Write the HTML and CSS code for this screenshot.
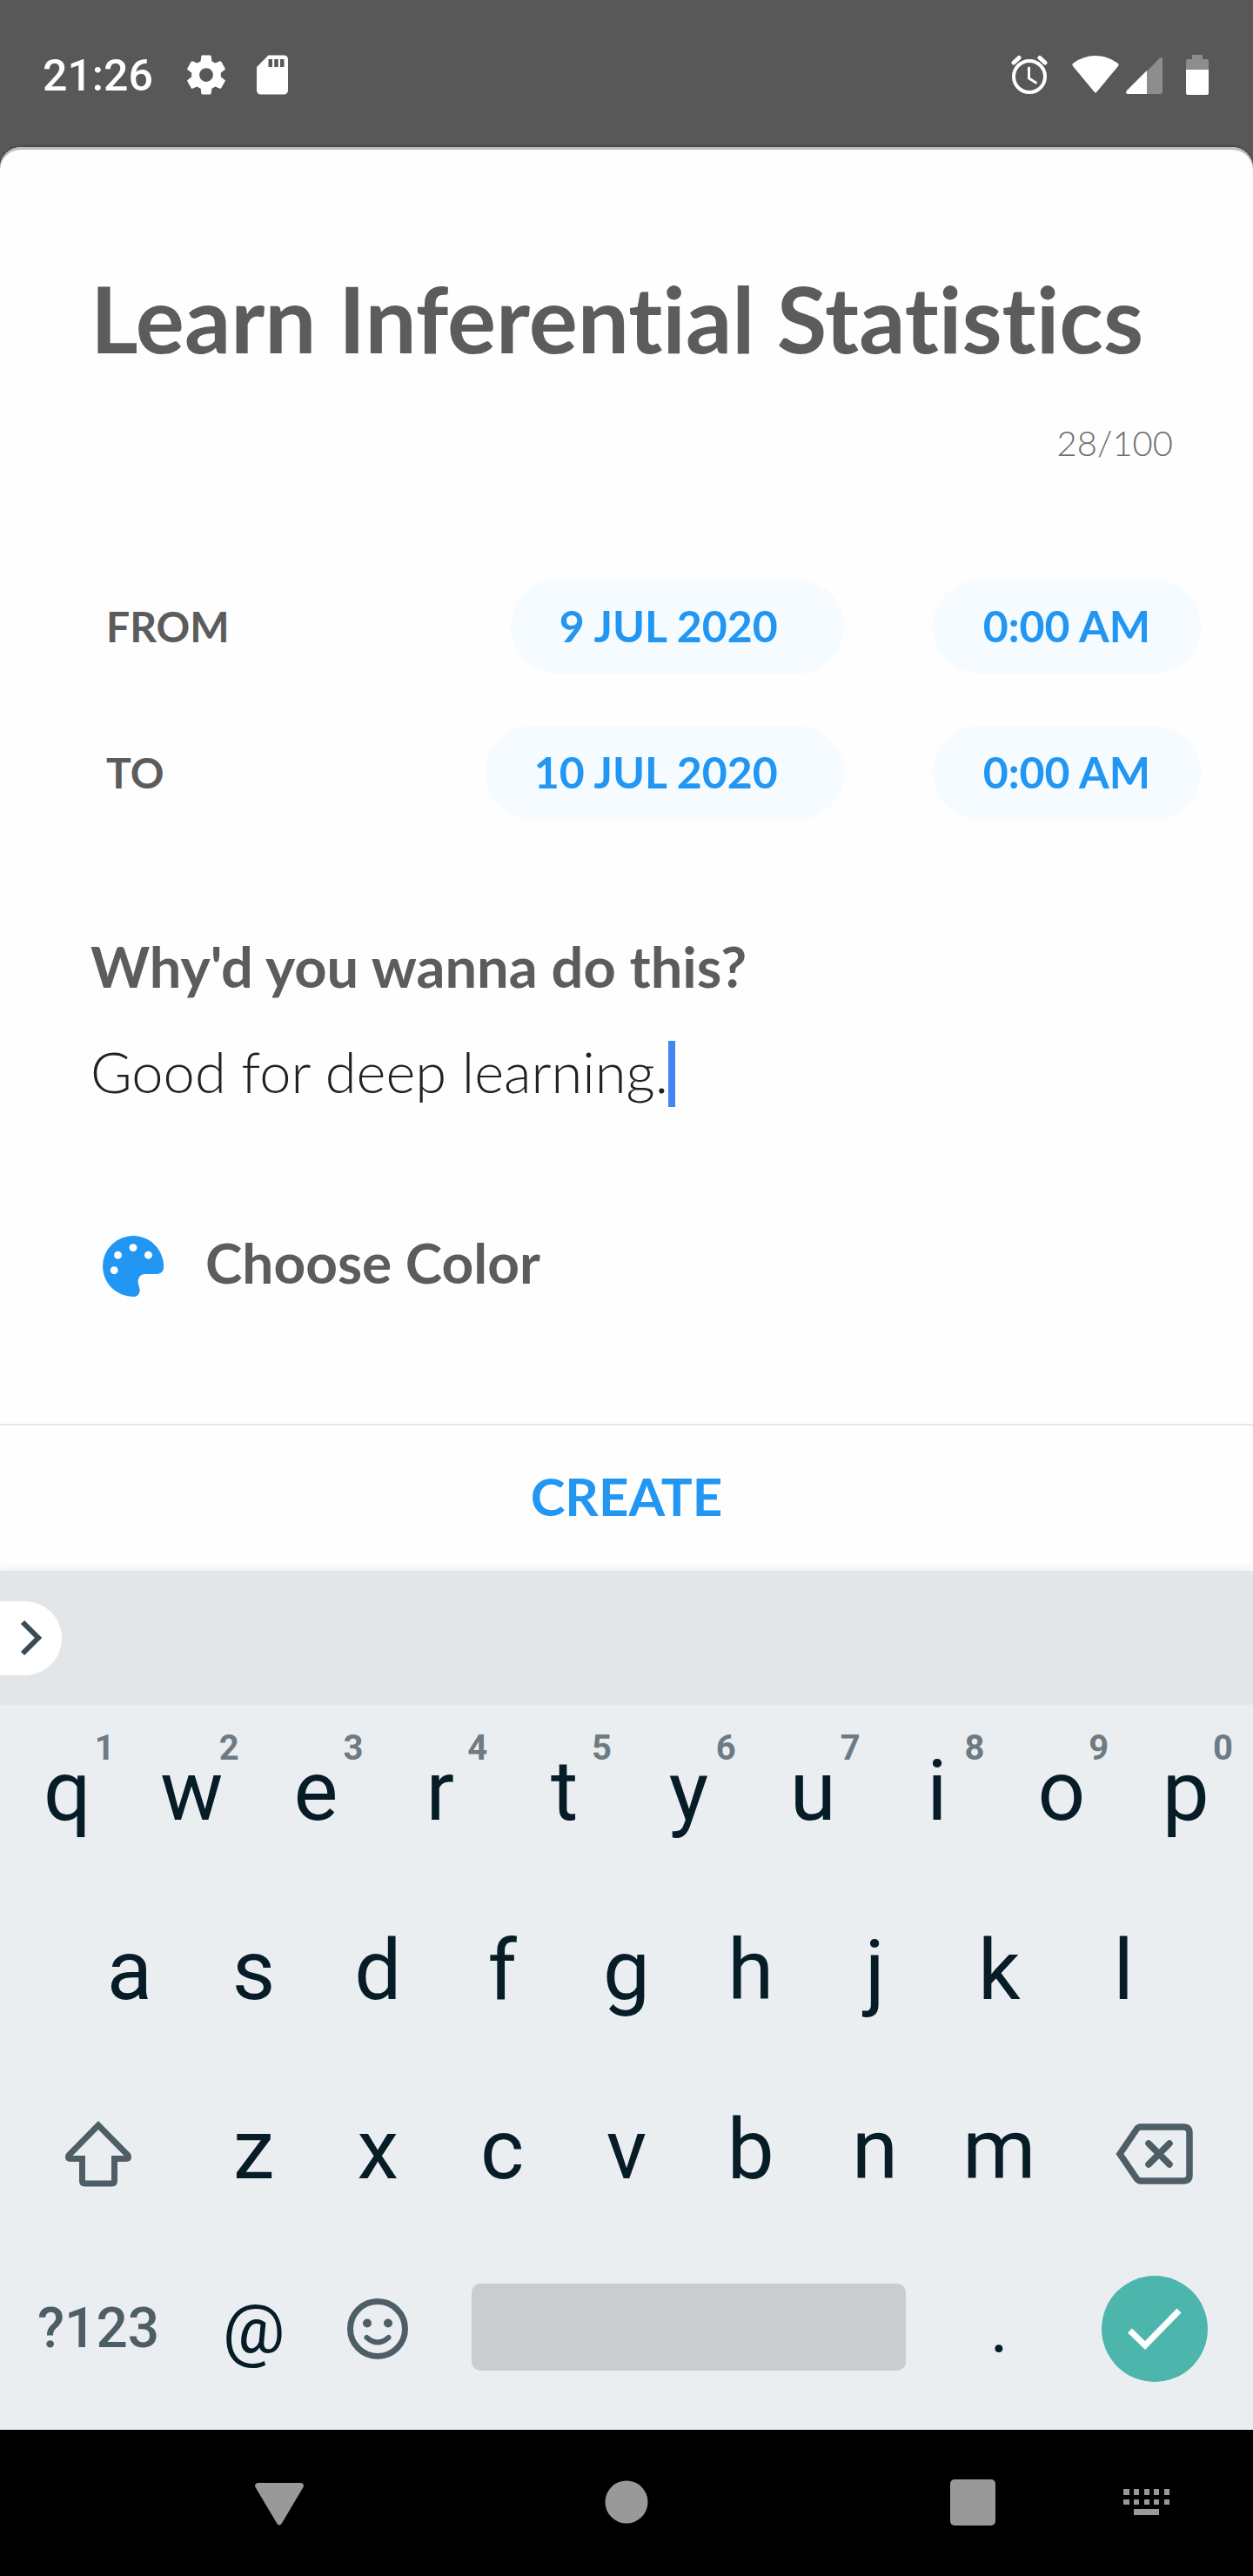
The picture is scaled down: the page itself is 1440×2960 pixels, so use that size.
FILE: index.html
```html
<!DOCTYPE html>
<html lang="en">
<head>
<meta charset="utf-8">
<meta name="viewport" content="width=device-width, initial-scale=1">
<title>New goal</title>
<link rel="stylesheet" href="styles.css">
</head>
<body>
<div class="screen">
  <header class="status">
    <div class="status-side status-left">
      <time class="clock">21:26</time>
      <svg class="icon-54" viewBox="0 0 24 24" aria-hidden="true"><path fill="#fff" d="M19.43 12.98c.04-.32.07-.64.07-.98s-.03-.66-.07-.98l2.11-1.65c.19-.15.24-.42.12-.64l-2-3.46c-.12-.22-.39-.3-.61-.22l-2.49 1c-.52-.4-1.08-.73-1.69-.98l-.38-2.65C14.46 2.18 14.25 2 14 2h-4c-.25 0-.46.18-.49.42l-.38 2.65c-.61.25-1.17.59-1.69.98l-2.49-1c-.23-.09-.49 0-.61.22l-2 3.46c-.13.22-.07.49.12.64l2.11 1.65c-.04.32-.07.65-.07.98s.03.66.07.98l-2.11 1.65c-.19.15-.24.42-.12.64l2 3.46c.12.22.39.3.61.22l2.49-1c.52.4 1.08.73 1.69.98l.38 2.65c.03.24.24.42.49.42h4c.25 0 .46-.18.49-.42l.38-2.65c.61-.25 1.17-.59 1.69-.98l2.49 1c.23.09.49 0 .61-.22l2-3.46c.12-.22.07-.49-.12-.64l-2.11-1.65zM12 15.5c-1.93 0-3.5-1.57-3.5-3.5s1.57-3.5 3.5-3.5 3.5 1.57 3.5 3.5-1.57 3.5-3.5 3.5z"/></svg>
      <svg class="icon-54" viewBox="0 0 24 24" aria-hidden="true"><path fill="#fff" d="M18 2h-8L4.02 8 4 20c0 1.100.9 2 2 2h12c1.100 0 2-.9 2-2V4c0-1.100-.9-2-2-2zm-6 6h-2V4h2v4zm3 0h-2V4h2v4zm3 0h-2V4h2v4z"/></svg>
    </div>
    <div class="status-side status-right">
      <svg class="alarm" viewBox="0 0 42 46" aria-hidden="true"><g fill="none" stroke="#fff" stroke-linecap="round"><circle cx="21" cy="25" r="18" stroke-width="4"/><path stroke-width="3" d="M20.500 15v12l8 5"/><path stroke-width="5" d="M3 9l6-5.500M39 9l-6-5.500"/></g></svg>
      <svg class="wifi" viewBox="0 0 54 46" aria-hidden="true"><path fill="#fff" d="M1 13Q-.5 11 1.500 9.500Q13 1 27 1T52.500 9.500Q54.500 11 53 13L28.500 42.500Q27 44.500 25.500 42.500z"/></svg>
      <svg class="signal" viewBox="0 0 42 46" aria-hidden="true"><path fill="#fff" fill-opacity=".32" d="M24 19L38.500 3.800Q42 1.500 42 5v37q0 3-3 3H24z"/><path fill="#fff" d="M24 18v27H2q-3.500-1-1-4z"/></svg>
      <svg class="battery" viewBox="0 0 26 46" aria-hidden="true"><path fill="#fff" fill-opacity=".32" d="M7 0h12v5h5q2 0 2 2v10H0V7q0-2 2-2h5z"/><path fill="#fff" d="M0 17h26v27q0 2-2 2H2q-2 0-2-2z"/></svg>
    </div>
  </header>

  <form class="sheet">
    <div class="fields">
      <input class="title" type="text" value="Learn Inferential Statistics" maxlength="100" aria-label="Goal title">
      <p class="counter">28/100</p>
      <div class="when">
        <span class="when-label">FROM</span>
        <button class="pill" type="button">9 JUL 2020</button>
        <button class="pill pill-time" type="button">0:00 AM</button>
      </div>
      <div class="when">
        <span class="when-label">TO</span>
        <button class="pill" type="button">10 JUL 2020</button>
        <button class="pill pill-time" type="button">0:00 AM</button>
      </div>
      <label class="question" for="reason">Why'd you wanna do this?</label>
      <div class="reason-row">
        <input class="reason" id="reason" type="text" value="Good for deep learning.">
        <span class="caret"></span>
      </div>
      <button class="color" type="button">
        <svg class="palette" viewBox="3 3 18 18" aria-hidden="true"><path fill="#2196f3" d="M12 3a9 9 0 0 0 0 18c1 0 1.800-.6 1.950-1.700.15-1-.5-1.700-.5-2.700 0-1.300.8-2.300 2-2.300h3.600c1.300 0 2-.9 2-2.200C21 7 17 3 12 3z"/><g fill="#fff"><circle cx="12" cy="6.500" r="1.150"/><circle cx="7.500" cy="8.700" r="1.150"/><circle cx="16.500" cy="8.700" r="1.150"/><circle cx="6.400" cy="13.200" r="1.150"/></g></svg>
        <span class="color-label">Choose Color</span>
      </button>
    </div>
    <button class="create" type="submit">CREATE</button>
  </form>

  <section class="keyboard" aria-label="Keyboard">
    <div class="suggestions">
      <button class="expand" type="button" aria-label="Expand toolbar"><svg class="chevron" viewBox="0 0 26 42" aria-hidden="true"><path fill="none" stroke="#394b54" stroke-width="6" d="M3 3l18 18L3 39"/></svg></button>
    </div>
    <div class="keys">
      <div class="row row-top">
        <button class="key" type="button">q<span class="hint">1</span></button>
        <button class="key" type="button">w<span class="hint">2</span></button>
        <button class="key" type="button">e<span class="hint">3</span></button>
        <button class="key" type="button">r<span class="hint">4</span></button>
        <button class="key" type="button">t<span class="hint">5</span></button>
        <button class="key" type="button">y<span class="hint">6</span></button>
        <button class="key" type="button">u<span class="hint">7</span></button>
        <button class="key" type="button">i<span class="hint">8</span></button>
        <button class="key" type="button">o<span class="hint">9</span></button>
        <button class="key" type="button">p<span class="hint">0</span></button>
      </div>
      <div class="row row-home">
        <button class="key key-first" type="button">a</button>
        <button class="key" type="button">s</button>
        <button class="key" type="button">d</button>
        <button class="key" type="button">f</button>
        <button class="key" type="button">g</button>
        <button class="key" type="button">h</button>
        <button class="key" type="button">j</button>
        <button class="key" type="button">k</button>
        <button class="key" type="button">l</button>
      </div>
      <div class="row row-bottom">
        <button class="key key-icon" type="button" aria-label="Shift"><svg class="shift" viewBox="0 0 78 76" aria-hidden="true"><path fill="none" stroke="#4d5e66" stroke-width="7" d="M39 5L5 39.500Q3 43.500 7 43.500H20.500V69q0 3 3 3h31q3 0 3-3V43.500H71q4 0 2-4z"/></svg></button>
        <button class="key" type="button">z</button>
        <button class="key" type="button">x</button>
        <button class="key" type="button">c</button>
        <button class="key" type="button">v</button>
        <button class="key" type="button">b</button>
        <button class="key" type="button">n</button>
        <button class="key" type="button">m</button>
        <button class="key key-icon" type="button" aria-label="Backspace"><svg class="backspace" viewBox="0 0 89 70" aria-hidden="true"><g fill="none" stroke="#4d5e66" stroke-width="7.500"><path d="M5 35L24 7q2-3 5-3h49q7 0 7 7v48q0 7-7 7H29q-3 0-5-3z"/><path stroke-linecap="round" d="M38 23l24 24M62 23L38 47"/></g></svg></button>
      </div>
      <div class="row row-space">
        <button class="key key-mode" type="button">?123</button>
        <button class="key key-symbol" type="button">@</button>
        <button class="key" type="button" aria-label="Emoji"><svg class="smiley" viewBox="0 0 70 70" aria-hidden="true"><circle cx="35" cy="35" r="31.500" fill="none" stroke="#4d5e66" stroke-width="7"/><circle cx="23" cy="28.500" r="5" fill="#4d5e66"/><circle cx="47" cy="28.500" r="5" fill="#4d5e66"/><path fill="none" stroke="#4d5e66" stroke-width="6" stroke-linecap="round" d="M22.500 45Q35 56 47.500 45"/></svg></button>
        <button class="space" type="button" aria-label="Space"></button>
        <button class="key key-symbol" type="button">.</button>
        <button class="key" type="button" aria-label="Done"><span class="done"><svg class="check" viewBox="0 0 62 48" aria-hidden="true"><path fill="none" stroke="#fff" stroke-width="7" d="M2.500 26L20 43 59 3"/></svg></span></button>
      </div>
    </div>
  </section>

  <nav class="nav" aria-label="System navigation">
    <button class="nav-button nav-back" type="button" aria-label="Back"><svg class="nav-icon" viewBox="0 0 56 56" aria-hidden="true"><path fill="#999" d="M3 5h50q4 1 2.500 5L30.500 52q-2.500 3-5 0L.5 10Q-1 6 3 5z"/></svg></button>
    <button class="nav-button nav-home" type="button" aria-label="Home"><svg class="nav-icon" viewBox="0 0 56 56" aria-hidden="true"><circle cx="28" cy="27" r="24.500" fill="#999"/></svg></button>
    <button class="nav-button nav-recent" type="button" aria-label="Recent apps"><svg class="nav-icon" viewBox="0 0 56 56" aria-hidden="true"><rect x="2" y="1" width="52" height="53" rx="5" fill="#999"/></svg></button>
    <button class="nav-button nav-input" type="button" aria-label="Change keyboard"><svg class="nav-icon" viewBox="0 0 56 56" aria-hidden="true"><path fill="#999" d="M1 12h7v7H1zM13 12h6v7h-6zM25 12h6v7h-6zM36 12h6v7h-6zM48 12h6v7h-6zM1 24h7v6H1zM13 24h6v6h-6zM25 24h6v6h-6zM36 24h6v6h-6zM48 24h6v6h-6zM13 35h29v7H13z"/></svg></button>
  </nav>
</div>
</body>
</html>
```

FILE: styles.css
```css
* {
  box-sizing: border-box;
}

body {
  margin: 0;
  background: #585858;
  font-family: Lato, "Open Sans", sans-serif;
  color: #5c5c5c;
}

button,
input {
  margin: 0;
  padding: 0;
  border: 0;
  background: none;
  color: inherit;
  font: inherit;
  outline: 0;
}

svg {
  display: block;
  flex: none;
}

.screen {
  display: flex;
  flex-direction: column;
  min-height: 100vh;
}

/* Status bar */

.status {
  display: flex;
  justify-content: space-between;
  height: 169px;
  padding: 56px 51px 53px 49px;
  font-family: Roboto, sans-serif;
}

.status-side {
  display: flex;
  align-items: center;
  height: 60px;
}

.status-left {
  gap: 22px;
}

.clock {
  width: 139px;
  padding-top: 2px;
  color: #fff;
  font-size: 50px;
  font-weight: 500;
  line-height: 60px;
}

.icon-54 {
  width: 54px;
  height: 54px;
}

.alarm {
  width: 42px;
  height: 46px;
  margin-right: 28px;
}

.wifi {
  width: 54px;
  height: 46px;
  margin-right: 8px;
}

.signal {
  width: 42px;
  height: 46px;
  margin-right: 27px;
}

.battery {
  width: 26px;
  height: 46px;
}

/* Goal form */

.sheet {
  display: flex;
  flex: 1;
  flex-direction: column;
  justify-content: space-between;
  border-radius: 24px 24px 0 0;
  background: #fefefe;
  box-shadow: inset 0 3px #bdbdbd, 0 -1px 3px rgba(0, 0, 0, 0.3);
}

.fields {
  display: flex;
  flex-direction: column;
  padding: 132px 60px 0 104px;
}

.title {
  width: 100%;
  height: 128px;
  font-size: 105px;
  font-variant-ligatures: none;
  font-weight: 700;
}

.counter {
  margin: 54px 32px 131px 0;
  color: #6e6e6e;
  font-size: 40px;
  font-weight: 300;
  line-height: 52px;
  text-align: right;
}

.when {
  display: flex;
  align-items: center;
  height: 108px;
  margin-bottom: 60px;
  padding-left: 18px;
  font-weight: 700;
}

.when-label {
  flex: 1;
  padding-bottom: 2px;
  font-size: 48px;
}

.pill {
  height: 108px;
  padding: 0 76px 2px 56px;
  border-radius: 54px;
  background: #f5fbff;
  color: #2196f3;
  font-size: 50px;
}

.pill-time {
  margin-left: 102px;
  padding: 0 58px 2px;
}

.question {
  margin-top: 72px;
  font-size: 65px;
  font-weight: 700;
  line-height: 72px;
}

.reason-row {
  display: flex;
  height: 76px;
  margin-top: 50px;
}

.reason {
  field-sizing: content;
  height: 76px;
  padding-bottom: 6px;
  color: #202124;
  font-size: 65px;
  font-weight: 300;
}

.caret {
  width: 8px;
  background: #4285f4;
}

.color {
  display: flex;
  align-items: center;
  align-self: flex-start;
  gap: 48px;
  height: 96px;
  margin-top: 135px;
  padding-left: 14px;
  font-size: 64px;
  font-weight: 700;
}

.color-label {
  padding-bottom: 10px;
}

.palette {
  width: 70px;
  height: 70px;
}

.create {
  height: 169px;
  padding-bottom: 6px;
  border-top: 2px solid #e6e6e6;
  color: #2196f3;
  font-size: 60px;
  font-weight: 700;
}

/* Keyboard */

.keyboard {
  background: #ebeef1;
  box-shadow: 0 -2px 10px rgba(0, 0, 0, 0.08);
  font-family: Roboto, sans-serif;
}

.suggestions {
  display: flex;
  align-items: center;
  height: 154px;
  background: #e2e6e9;
}

.expand {
  display: flex;
  align-items: center;
  width: 71px;
  height: 85px;
  padding-left: 23px;
  border-radius: 0 42px 42px 0;
  background: #fff;
}

.chevron {
  width: 26px;
  height: 42px;
}

.keys {
  display: grid;
  grid-auto-rows: 198px;
  gap: 8px;
  padding: 0 6px 17px;
}

.row {
  display: grid;
}

.row-top {
  grid-template-columns: repeat(10, minmax(0, 1fr));
}

.row-home {
  grid-template-columns: repeat(20, minmax(0, 1fr));
}

.row-home .key {
  grid-column: span 2;
}

.row-home .key-first {
  grid-column: 2 / span 2;
}

.row-bottom {
  grid-template-columns: minmax(0, 3fr) repeat(7, minmax(0, 2fr)) minmax(0, 3fr);
}

.row-space {
  grid-template-columns: minmax(0, 3fr) repeat(2, minmax(0, 2fr)) minmax(0, 8fr) minmax(0, 2fr) minmax(0, 3fr);
  align-items: center;
}

.key {
  position: relative;
  display: flex;
  align-items: center;
  justify-content: center;
  color: #061c26;
  font-size: 96px;
  line-height: 112px;
}

.key-icon {
  padding-top: 10px;
}

.hint {
  position: absolute;
  top: 26px;
  right: 17px;
  color: #6e7b82;
  font-size: 40px;
  font-weight: 700;
  line-height: 48px;
}

.key-mode {
  color: #4d5e66;
  font-size: 64px;
  font-weight: 500;
}

.key-symbol {
  font-size: 80px;
}

.shift {
  width: 78px;
  height: 76px;
}

.backspace {
  width: 89px;
  height: 70px;
}

.smiley {
  width: 70px;
  height: 70px;
}

.space {
  height: 100px;
  margin: 0 36px 4px;
  border-radius: 10px;
  background: #c9cdd0;
}

.done {
  display: flex;
  align-items: center;
  justify-content: center;
  width: 122px;
  height: 122px;
  border-radius: 50%;
  background: #4db6ac;
}

.check {
  width: 62px;
  height: 48px;
}

/* System navigation */

.nav {
  display: grid;
  grid-template-columns: 293fr 56px 343fr 56px 342fr 56px 144fr 56px 94fr;
  align-items: center;
  height: 168px;
  background: #000;
}

.nav-icon {
  width: 56px;
  height: 56px;
}

.nav-back {
  grid-column: 2;
}

.nav-home {
  grid-column: 4;
}

.nav-recent {
  grid-column: 6;
}

.nav-input {
  grid-column: 8;
}
```
